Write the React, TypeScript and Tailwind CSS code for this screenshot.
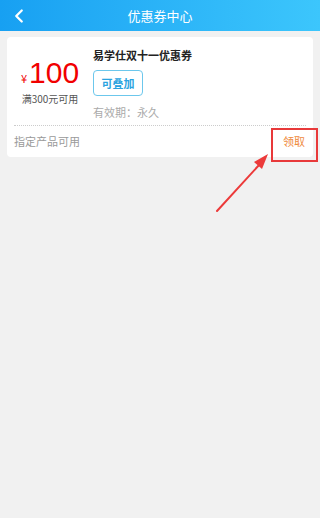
import { ChevronLeft } from 'lucide-react';

const font = { fontFamily: '"Noto Sans CJK SC", "Noto Sans", sans-serif' };

export default function App() {
  return (
    <div className="w-[320px] h-[518px] bg-[#f1f1f1] relative overflow-hidden" style={font}>
      {/* header */}
      <div className="h-[31px] bg-gradient-to-r from-[#17a0f2] to-[#3cc6fc] flex items-center relative">
        <ChevronLeft className="absolute left-[8px] text-white" size={22} strokeWidth={2.5} />
        <div className="flex-1 text-center text-white text-[13px]">优惠券中心</div>
      </div>

      {/* coupon card */}
      <div className="mx-[7px] mt-[6px] bg-white rounded-[4px] w-[306px]">
        <div className="flex h-[88px]">
          <div className="w-[86px] flex flex-col items-center pt-[24px]">
            <div className="flex items-end text-[#f10000] leading-none">
              <span className="text-[11px] mb-[1px] mr-[2px]">¥</span>
              <span className="text-[30px] leading-[24px]" style={{ fontFamily: '"Liberation Sans", Arial, sans-serif' }}>100</span>
            </div>
            <div className="text-[10px] text-[#555] mt-[6px]">满300元可用</div>
          </div>
          <div className="flex flex-col pt-[11px]">
            <div className="text-[11px] font-bold text-[#222] leading-[15px]">易学仕双十一优惠券</div>
            <div className="mt-[7px] w-[50px] h-[26px] border border-[#6cc7ec] rounded-[4px] flex items-center justify-center text-[11px] text-[#2aa3e0] font-semibold">
              可叠加
            </div>
            <div className="mt-[8px] text-[11px] text-[#aaa] leading-[16px]">有效期：永久</div>
          </div>
        </div>
        <div className="mx-[7px] border-t border-dotted border-[#ccc]" />
        <div className="flex items-center justify-between h-[31px] pl-[7px] pr-[8px]">
          <span className="text-[11px] text-[#9a9a9a]">指定产品可用</span>
          <span className="text-[11px] text-[#ef8a3c]">领取</span>
        </div>
      </div>

      {/* annotation box */}
      <div className="absolute left-[271px] top-[128px] w-[47px] h-[34px] border-2 border-[#e8393a]" />
      {/* annotation arrow */}
      <svg className="absolute left-0 top-0" width="320" height="518">
        <line x1="217" y1="211" x2="260" y2="164" stroke="#ec3a3a" strokeWidth="2" strokeLinecap="round" />
        <polygon points="268,154 254,162 262,169" fill="#ec3a3a" />
      </svg>
    </div>
  );
}
